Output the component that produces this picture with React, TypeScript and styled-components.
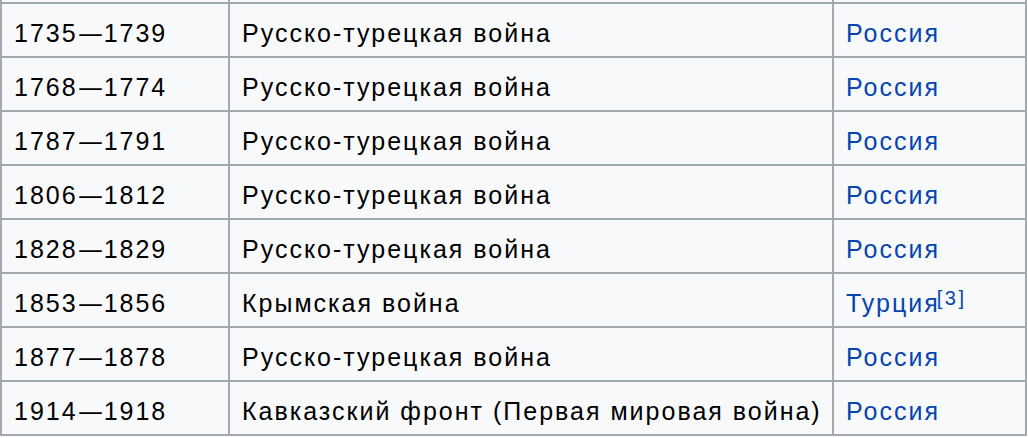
import React from 'react';
import styled, { createGlobalStyle } from 'styled-components';

interface War {
  years: string;
  name: string;
  winner: string;
  note?: string;
}

const wars: War[] = [
  { years: '1735—1739', name: 'Русско-турецкая война', winner: 'Россия' },
  { years: '1768—1774', name: 'Русско-турецкая война', winner: 'Россия' },
  { years: '1787—1791', name: 'Русско-турецкая война', winner: 'Россия' },
  { years: '1806—1812', name: 'Русско-турецкая война', winner: 'Россия' },
  { years: '1828—1829', name: 'Русско-турецкая война', winner: 'Россия' },
  { years: '1853—1856', name: 'Крымская война', winner: 'Турция', note: '[3]' },
  { years: '1877—1878', name: 'Русско-турецкая война', winner: 'Россия' },
  { years: '1914—1918', name: 'Кавказский фронт (Первая мировая война)', winner: 'Россия' },
];

const GlobalStyle = createGlobalStyle`
  html, body {
    margin: 0;
    padding: 0;
    background: #ffffff;
    overflow: hidden;
  }
`;

const Page = styled.div`
  width: 1028px;
  height: 438px;
  overflow: hidden;
`;

const Table = styled.table`
  border-collapse: collapse;
  table-layout: fixed;
  width: 1025px;
  background: #f8f9fa;
  font-family: 'Liberation Sans', Arial, sans-serif;
  font-size: 25px;
  letter-spacing: 2px;
  color: #000000;
`;

const Cell = styled.td<{ $spacer?: boolean }>`
  border: 2px solid #a2a9b1;
  height: ${(p) => (p.$spacer ? '3px' : '54px')};
  padding: ${(p) => (p.$spacer ? '0' : '5px 11px 0 12px')};
  ${(p) => (p.$spacer ? 'border-top: 0;' : '')}
  vertical-align: middle;
  white-space: nowrap;
  line-height: 28px;
  box-sizing: border-box;
`;

const Dash = styled.span`
  letter-spacing: 0;
  margin: 0 1px 0 0;
  display: inline-block;
  transform: scaleX(0.9);
`;

const Link = styled.a`
  color: #0645ad;
  text-decoration: none;
`;

const Ref = styled.sup`
  font-size: 20px;
  line-height: 1;
  letter-spacing: 2.5px;
  vertical-align: 7px;
  margin-left: -3px;
`;

const Years: React.FC<{ value: string }> = ({ value }) => {
  const [from, to] = value.split('—');
  return (
    <>
      {from}
      <Dash>—</Dash>
      {to}
    </>
  );
};

export default function App() {
  return (
    <Page>
      <GlobalStyle />
      <Table>
        <colgroup>
          <col style={{ width: 228 }} />
          <col style={{ width: 604 }} />
          <col style={{ width: 193 }} />
        </colgroup>
        <tbody>
          <tr>
            <Cell $spacer />
            <Cell $spacer />
            <Cell $spacer />
          </tr>
          {wars.map((w) => (
            <tr key={w.years}>
              <Cell>
                <Years value={w.years} />
              </Cell>
              <Cell>{w.name}</Cell>
              <Cell>
                <Link href="#">{w.winner}</Link>
                {w.note && (
                  <Ref>
                    <Link href="#">{w.note}</Link>
                  </Ref>
                )}
              </Cell>
            </tr>
          ))}
        </tbody>
      </Table>
    </Page>
  );
}
